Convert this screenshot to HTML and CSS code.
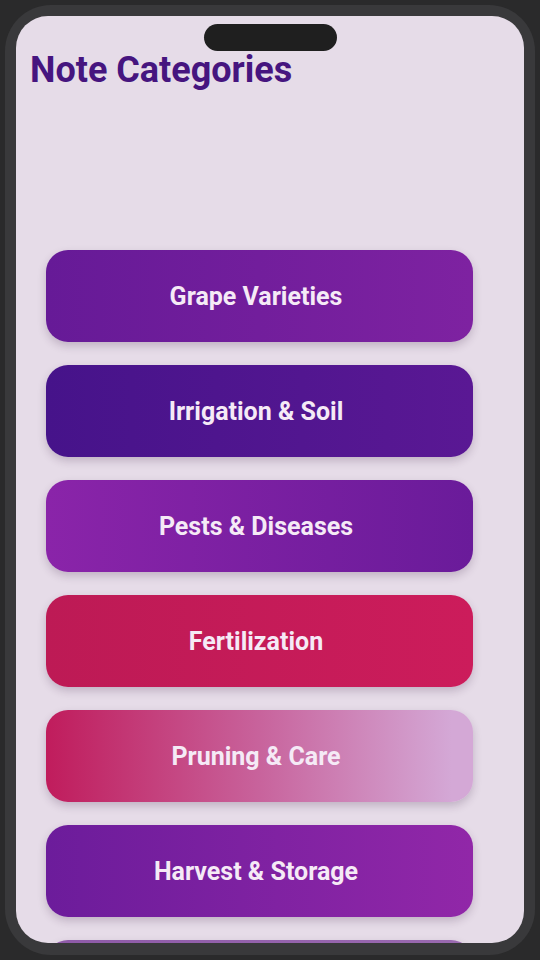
FILE: index.html
```html
<!DOCTYPE html>
<html>
<head>
<title>Note Categories</title>
<link rel="stylesheet" href="styles.css">
</head>
<body>
    <div class="phone">
        <div class="screen">
            <div class="notch"></div>
            <h1 class="title">Note Categories</h1>
            <div class="list">
                <div class="cat grape">Grape Varieties</div>
                <div class="cat irrigation">Irrigation &amp; Soil</div>
                <div class="cat pests">Pests &amp; Diseases</div>
                <div class="cat fert">Fertilization</div>
                <div class="cat pruning">Pruning &amp; Care</div>
                <div class="cat harvest">Harvest &amp; Storage</div>
                <div class="cat other"></div>
            </div>
        </div>
    </div>
</body>
</html>
```

FILE: styles.css
```css
body {
    margin: 0;
    background-color: #2a2a2b;
    font-family: Roboto, "Liberation Sans", sans-serif;
}
.phone {
    margin: 5px;
    height: 950px;
    box-sizing: border-box;
    padding: 11px;
    border-radius: 46px;
    background-color: #39393b;
}
.screen {
    position: relative;
    height: 927px;
    border-radius: 32px;
    background-color: #e6dce8;
    overflow: hidden;
}
.notch {
    position: absolute;
    top: 8px;
    left: 188px;
    width: 133px;
    height: 27px;
    border-radius: 14px;
    background-color: #1f1f1f;
}
.title {
    margin: 0;
    padding: 34px 0 0 14px;
    font-size: 36px;
    font-weight: 700;
    line-height: 40px;
    color: #46157f;
}
.list {
    display: flex;
    flex-direction: column;
    gap: 23px;
    width: 427px;
    margin: 160px 0 0 30px;
}
.cat {
    height: 92px;
    flex-shrink: 0;
    box-sizing: border-box;
    padding-right: 7px;
    border-radius: 22px;
    display: flex;
    align-items: center;
    justify-content: center;
    color: #f5eaf6;
    font-size: 25px;
    font-weight: 700;
    box-shadow: 0 4px 9px rgba(60, 30, 70, 0.22);
}
.grape { background: linear-gradient(to right, #661a97, #7e22a1); }
.irrigation { background: linear-gradient(to right, #46138a, #5a1894); }
.pests { background: linear-gradient(to right, #8a24a9, #6a1b9a); }
.fert { background: linear-gradient(to right, #bd1a55, #cc1c5b); }
.pruning { background: linear-gradient(to right, #c01c5c, #c8639c 50%, #d4a8d6 95%); }
.harvest { background: linear-gradient(to right, #6c1c9b, #9127a8); }
.other { background: linear-gradient(to right, #8e5aa8, #9a6ab0); }
```
